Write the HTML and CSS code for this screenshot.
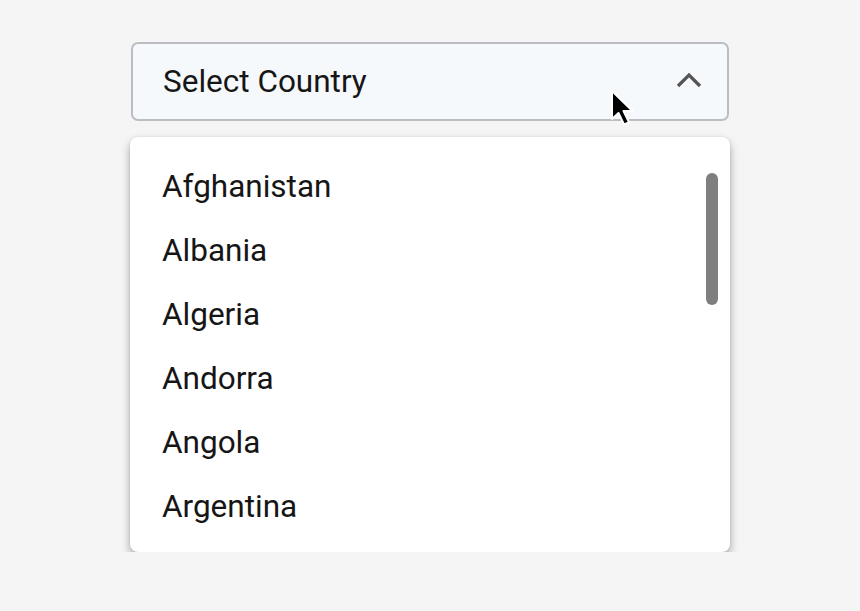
FILE: index.html
```html
<!DOCTYPE html>
<html>
<head>
<meta charset="utf-8">
<link rel="stylesheet" href="styles.css">
</head>
<body>
<div class="wrap">
  <div class="select">
    <span class="label">Select Country</span>
    <svg class="chev" width="26" height="16" viewBox="0 0 26 16"><path d="M2 14 L13 3 L24 14" fill="none" stroke="#555" stroke-width="3.2"/></svg>
    <svg class="cursor" width="28" height="40" viewBox="0 0 28 40"><path d="M2 2 L2 30 L8.5 24 L14 35.5 L19 33.3 L13.5 22 L22.5 22 Z" fill="#000" stroke="#fff" stroke-width="2" stroke-linejoin="round"/></svg>
  </div>
  <div class="menu">
    <ul class="list">
      <li>Afghanistan</li>
      <li>Albania</li>
      <li>Algeria</li>
      <li>Andorra</li>
      <li>Angola</li>
      <li>Argentina</li>
    </ul>
    <div class="thumb"></div>
  </div>
</div>
</body>
</html>
```
FILE: styles.css
```css
html, body {
  margin: 0;
  padding: 0;
  background: #f5f5f5;
  font-family: Roboto, "Liberation Sans", sans-serif;
}
.wrap {
  width: 600px;
  margin: 0 auto;
  padding-top: 42px;
}
.select {
  position: relative;
  box-sizing: border-box;
  height: 79px;
  margin: 0 1px;
  border: 2px solid #babec3;
  border-radius: 7px;
  background: #f6f9fc;
  display: flex;
  align-items: center;
  justify-content: space-between;
  padding: 0 25px 0 30px;
}
.label {
  font-size: 31.5px;
  color: #161616;
  line-height: 1;
}
.chev {
  display: block;
  margin-top: -4px;
}
.cursor {
  position: absolute;
  left: 477px;
  top: 45px;
}
.menu {
  position: relative;
  margin-top: 16px;
  height: 415px;
  background: #fff;
  border-radius: 8px;
  box-shadow: 0 5px 10px rgba(0,0,0,0.32), 0 0 3px rgba(0,0,0,0.08);
  overflow: hidden;
}
.list {
  list-style: none;
  margin: 0;
  padding: 18px 0 0 0;
}
.list li {
  height: 64px;
  line-height: 64px;
  padding-left: 32px;
  font-size: 31.5px;
  color: #161616;
}
.thumb {
  position: absolute;
  right: 12px;
  top: 36px;
  width: 12px;
  height: 132px;
  border-radius: 6px;
  background: #7f7f7f;
}
```
